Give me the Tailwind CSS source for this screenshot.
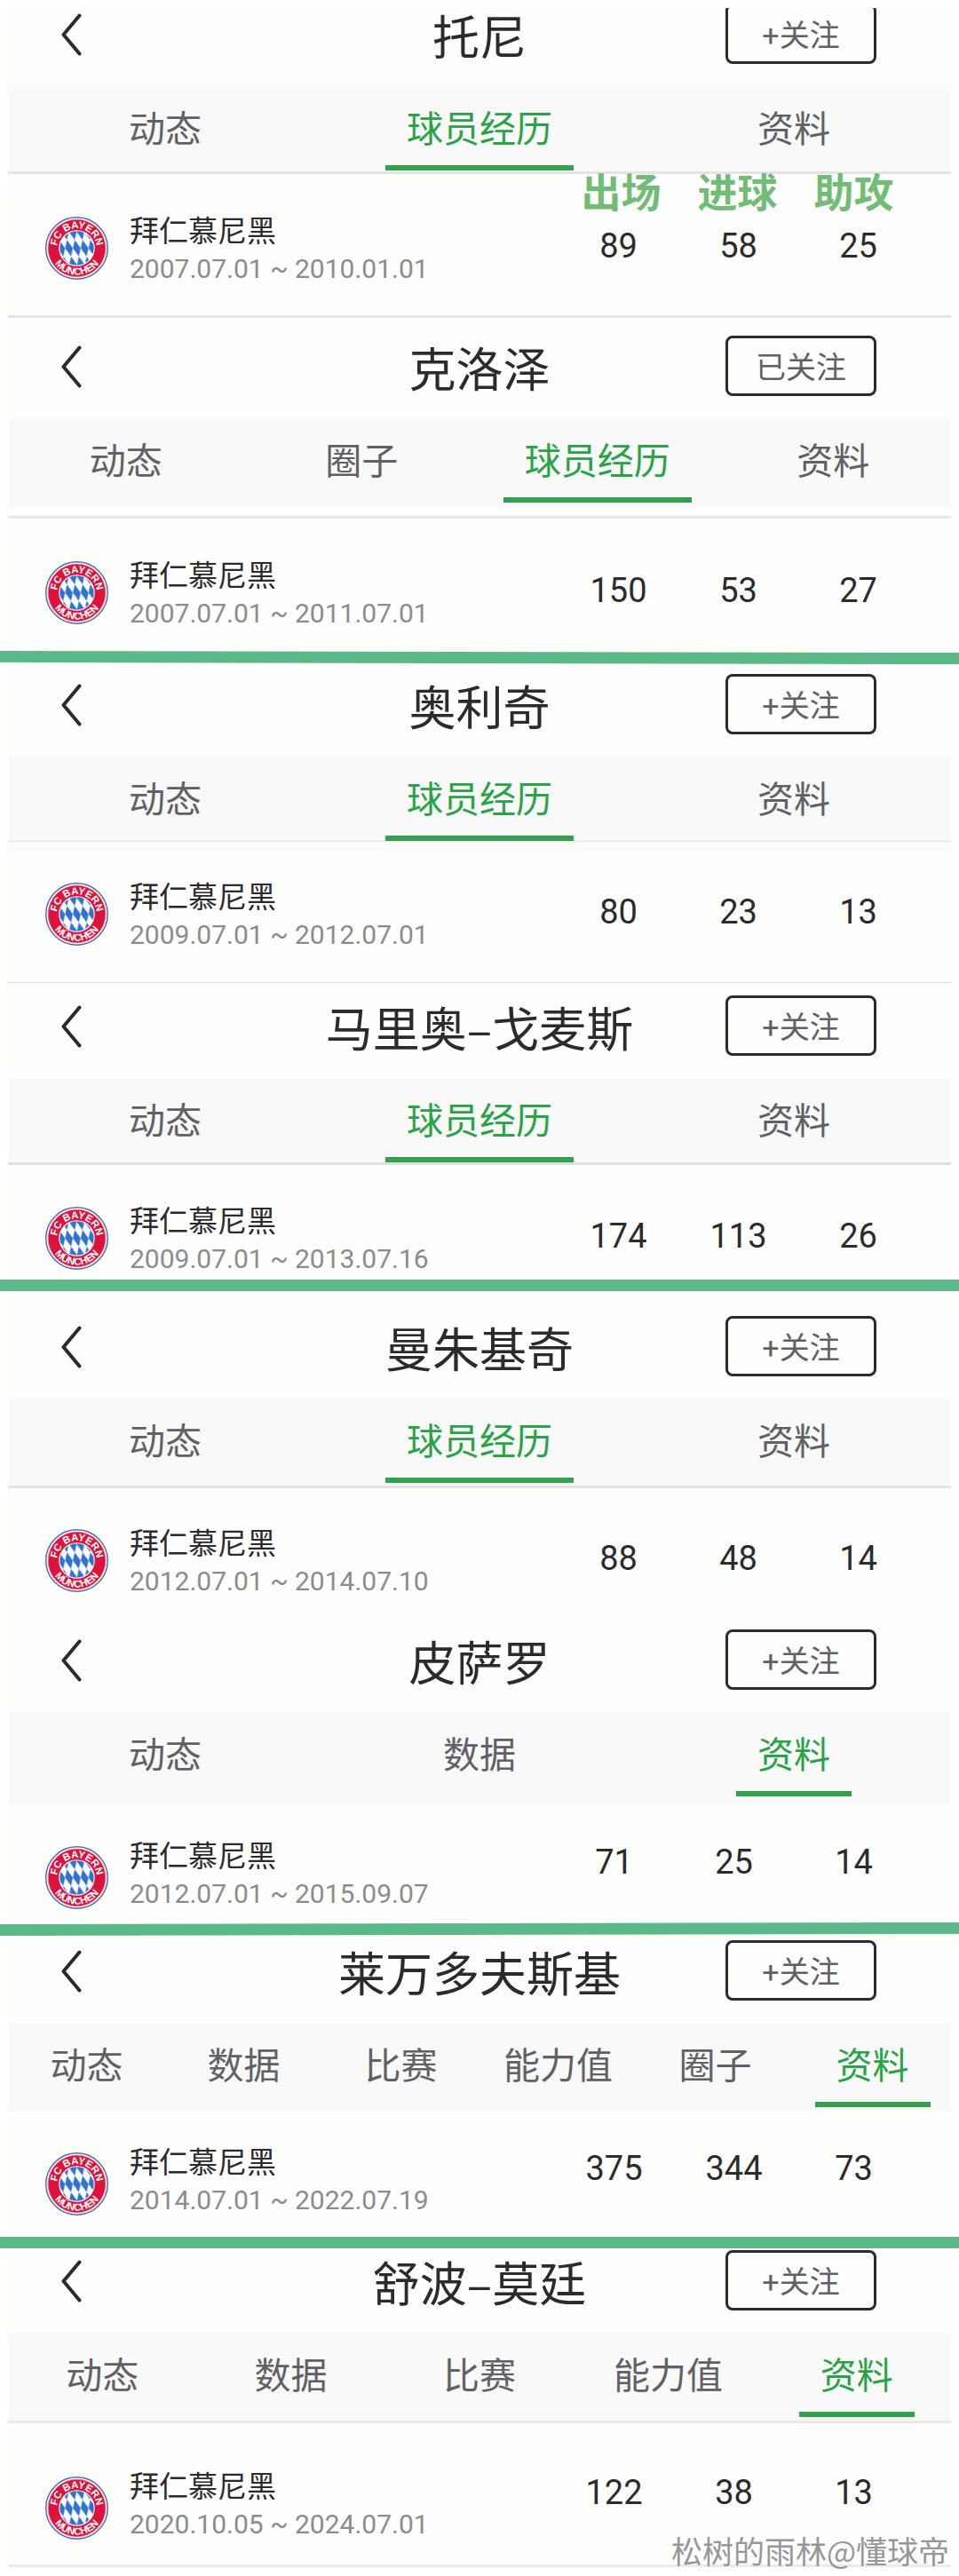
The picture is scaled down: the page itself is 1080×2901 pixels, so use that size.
<!DOCTYPE html>
<html lang="zh-CN">

<head>
	<meta charset="utf-8">
	<meta name="viewport" content="width=device-width, initial-scale=1">
	<title>拜仁慕尼黑 中锋数据</title>
	<script src="https://cdn.jsdelivr.net/npm/@tailwindcss/browser@4"></script>
</head>

<body class="bg-white text-[#2b2b2e] font-[Roboto,'Noto_Sans_CJK_SC',sans-serif]">

	<!-- back arrow, used by every header -->
	<svg class="absolute w-0 h-0" aria-hidden="true">
		<symbol id="back" viewBox="0 0 24 48">
			<path d="M21.500 2.500L3.500 24L21.500 45.500" fill="none" stroke="#2b2b2e" stroke-width="4" stroke-linecap="round" stroke-linejoin="round"/>
		</symbol>
	</svg>

	<main class="pt-[9px] pb-3">

		<section class="mx-[9px] bg-[#fefefc] overflow-hidden border-b-3 border-[#e4e4e4]">
			<header class="-mt-[5px] h-[93px] grid grid-cols-[1fr_auto_1fr] items-start pl-[59px] pr-[84px]">
				<button class="w-6 mt-[11px]" aria-label="返回"><svg class="w-6 h-12"><use href="#back"/></svg></button>
				<h2 class="font-['Noto_Sans_CJK_SC',sans-serif] text-[53px] leading-[70px] pl-[25px]">托尼</h2>
				<button class="justify-self-end w-[170px] h-[68px] border-3 border-[#2b2b2e] rounded-lg text-[34px] leading-[62px] pt-[2px] text-[#606166]">+关注</button>
			</header>
			<nav class="flex h-[99px] bg-[#f9f9f9] border-b-3 border-[#e4e4e4] text-[41px] leading-10 text-[#606166]">
				<div class="flex-1 flex justify-center"><a href="#" class="h-[95px] px-6 pt-[29px]">动态</a></div>
				<div class="flex-1 flex justify-center"><a href="#" class="h-[95px] px-6 pt-[29px] text-[#28a346] border-b-6 border-[#32a04d]">球员经历</a></div>
				<div class="flex-1 flex justify-center"><a href="#" class="h-[95px] px-6 pt-[29px]">资料</a></div>
			</nav>
			<div class="flex justify-end h-12 pr-[44px] text-[45px] leading-[45px] font-bold text-[#72bc78] text-center">
				<span class="w-[131px]">出场</span>
				<span class="w-[131px]">进球</span>
				<span class="w-[131px]">助攻</span>
			</div>
			<div class="flex items-start pl-[42px] pr-[37px] pb-9">
				<!-- club badge, reused by the other rows -->
				<svg class="w-[71px] h-[71px]" viewBox="0 0 100 100">
					<defs>
						<pattern id="lozenge" width="12" height="27" patternUnits="userSpaceOnUse" patternTransform="translate(50 50) rotate(-14) skewY(14)">
							<path d="M0 -13.5L6 0L0 13.5L-6 0ZM12 -13.5L18 0L12 13.5L6 0ZM0 13.5L6 27L0 40.5L-6 27ZM12 13.5L18 27L12 40.5L6 27Z" fill="#2f72cf"/>
						</pattern>
						<path id="arcTop" d="M18.500 50A31.500 31.500 0 0 1 81.500 50"/>
						<path id="arcBottom" d="M7.500 50A42.500 42.500 0 0 0 92.500 50"/>
					</defs>
					<g id="club">
						<circle cx="50" cy="50" r="49" fill="#fff" stroke="#5266b0" stroke-width="2"/>
						<circle cx="50" cy="50" r="45.500" fill="#dc143c" stroke="#e0668a" stroke-width="1"/>
						<circle cx="50" cy="50" r="28.500" fill="#fff"/>
						<circle cx="50" cy="50" r="27" fill="url(#lozenge)"/>
						<g fill="#fff" font-family="'Liberation Sans', sans-serif" font-weight="700" font-size="16" text-anchor="middle">
							<text><textPath href="#arcTop" startOffset="50%">FC BAYERN</textPath></text>
							<text><textPath href="#arcBottom" startOffset="50%">MÜNCHEN</textPath></text>
						</g>
					</g>
				</svg>
				<div class="flex-1 pl-6">
					<p class="text-[33px] leading-[34px]">拜仁慕尼黑</p>
					<p class="mt-[9px] text-[30px] leading-8 text-[#8b8c8e]">2007.07.01 ~ 2010.01.01</p>
				</div>
				<div class="grid grid-cols-[135px_135px_135px] text-center text-[38px] leading-[66px]">
					<span>89</span><span>58</span><span>25</span>
				</div>
			</div>
		</section>

		<section class="mx-[9px] bg-[#fefefc] pt-5 pb-[26px]">
			<header class="h-[93px] grid grid-cols-[1fr_auto_1fr] items-start pl-[59px] pr-[84px]">
				<button class="w-6 mt-[11px]" aria-label="返回"><svg class="w-6 h-12"><use href="#back"/></svg></button>
				<h2 class="font-['Noto_Sans_CJK_SC',sans-serif] text-[53px] leading-[70px] pl-[25px]">克洛泽</h2>
				<button class="justify-self-end w-[170px] h-[68px] border-3 border-[#2b2b2e] rounded-lg text-[34px] leading-[62px] pt-[2px] text-[#606166]">已关注</button>
			</header>
			<nav class="flex h-[100px] bg-[#f9f9f9] text-[41px] leading-10 text-[#606166]">
				<div class="flex-1 flex justify-center"><a href="#" class="h-[95px] px-6 pt-[29px]">动态</a></div>
				<div class="flex-1 flex justify-center"><a href="#" class="h-[95px] px-6 pt-[29px]">圈子</a></div>
				<div class="flex-1 flex justify-center"><a href="#" class="h-[95px] px-6 pt-[29px] text-[#28a346] border-b-6 border-[#32a04d]">球员经历</a></div>
				<div class="flex-1 flex justify-center"><a href="#" class="h-[95px] px-6 pt-[29px]">资料</a></div>
			</nav>
			<hr class="mt-[10px] border-t-3 border-[#e9e9e9]">
			<div class="flex items-start pl-[42px] pr-[37px] pt-12">
				<svg class="w-[71px] h-[71px]" viewBox="0 0 100 100"><use href="#club"/></svg>
				<div class="flex-1 pl-6">
					<p class="text-[33px] leading-[34px]">拜仁慕尼黑</p>
					<p class="mt-[9px] text-[30px] leading-8 text-[#8b8c8e]">2007.07.01 ~ 2011.07.01</p>
				</div>
				<div class="grid grid-cols-[135px_135px_135px] text-center text-[38px] leading-[66px]">
					<span>150</span><span>53</span><span>27</span>
				</div>
			</div>
		</section>

		<!-- green stroke, slightly lower on the right -->
		<svg class="block w-full h-[15px]" viewBox="0 0 100 15" preserveAspectRatio="none"><path d="M0 0L100 2V15L0 13Z" fill="#5bb888"/></svg>

		<section class="mx-[9px] bg-[#fefefc] pt-[11px] border-b border-[#dedede]">
			<header class="h-[93px] grid grid-cols-[1fr_auto_1fr] items-start pl-[59px] pr-[84px]">
				<button class="w-6 mt-[11px]" aria-label="返回"><svg class="w-6 h-12"><use href="#back"/></svg></button>
				<h2 class="font-['Noto_Sans_CJK_SC',sans-serif] text-[53px] leading-[70px] pl-[25px]">奥利奇</h2>
				<button class="justify-self-end w-[170px] h-[68px] border-3 border-[#2b2b2e] rounded-lg text-[34px] leading-[62px] pt-[2px] text-[#606166]">+关注</button>
			</header>
			<nav class="flex h-24 bg-[#f9f9f9] border-b border-[#dedede] text-[41px] leading-10 text-[#606166]">
				<div class="flex-1 flex justify-center"><a href="#" class="h-[95px] px-6 pt-[29px]">动态</a></div>
				<div class="flex-1 flex justify-center"><a href="#" class="h-[95px] px-6 pt-[29px] text-[#28a346] border-b-6 border-[#32a04d]">球员经历</a></div>
				<div class="flex-1 flex justify-center"><a href="#" class="h-[95px] px-6 pt-[29px]">资料</a></div>
			</nav>
			<div class="h-[10px] bg-[#fbfbfa]"></div>
			<div class="flex items-start pl-[42px] pr-[37px] pt-9 pb-[37px]">
				<svg class="w-[71px] h-[71px]" viewBox="0 0 100 100"><use href="#club"/></svg>
				<div class="flex-1 pl-6">
					<p class="text-[33px] leading-[34px]">拜仁慕尼黑</p>
					<p class="mt-[9px] text-[30px] leading-8 text-[#8b8c8e]">2009.07.01 ~ 2012.07.01</p>
				</div>
				<div class="grid grid-cols-[135px_135px_135px] text-center text-[38px] leading-[66px]">
					<span>80</span><span>23</span><span>13</span>
				</div>
			</div>
		</section>

		<section class="mx-[9px] bg-[#fefefc] pt-[14px] pb-[7px]">
			<header class="h-[93px] grid grid-cols-[1fr_auto_1fr] items-start pl-[59px] pr-[84px]">
				<button class="w-6 mt-[11px]" aria-label="返回"><svg class="w-6 h-12"><use href="#back"/></svg></button>
				<h2 class="font-['Noto_Sans_CJK_SC',sans-serif] text-[53px] leading-[70px] pl-[25px]">马里奥–戈麦斯</h2>
				<button class="justify-self-end w-[170px] h-[68px] border-3 border-[#2b2b2e] rounded-lg text-[34px] leading-[62px] pt-[2px] text-[#606166]">+关注</button>
			</header>
			<nav class="flex h-[98px] bg-[#f9f9f9] border-b-3 border-[#e0e0e0] text-[41px] leading-10 text-[#606166]">
				<div class="flex-1 flex justify-center"><a href="#" class="h-[95px] px-6 pt-[29px]">动态</a></div>
				<div class="flex-1 flex justify-center"><a href="#" class="h-[95px] px-6 pt-[29px] text-[#28a346] border-b-6 border-[#32a04d]">球员经历</a></div>
				<div class="flex-1 flex justify-center"><a href="#" class="h-[95px] px-6 pt-[29px]">资料</a></div>
			</nav>
			<div class="flex items-start pl-[42px] pr-[37px] pt-[47px]">
				<svg class="w-[71px] h-[71px]" viewBox="0 0 100 100"><use href="#club"/></svg>
				<div class="flex-1 pl-6">
					<p class="text-[33px] leading-[34px]">拜仁慕尼黑</p>
					<p class="mt-[9px] text-[30px] leading-8 text-[#8b8c8e]">2009.07.01 ~ 2013.07.16</p>
				</div>
				<div class="grid grid-cols-[135px_135px_135px] text-center text-[38px] leading-[66px]">
					<span>174</span><span>113</span><span>26</span>
				</div>
			</div>
		</section>

		<div class="h-[13px] bg-[#5bb888]"></div>

		<section class="mx-[9px] bg-[#fefefc] pt-7">
			<header class="h-[93px] grid grid-cols-[1fr_auto_1fr] items-start pl-[59px] pr-[84px]">
				<button class="w-6 mt-[11px]" aria-label="返回"><svg class="w-6 h-12"><use href="#back"/></svg></button>
				<h2 class="font-['Noto_Sans_CJK_SC',sans-serif] text-[53px] leading-[70px] pl-[25px]">曼朱基奇</h2>
				<button class="justify-self-end w-[170px] h-[68px] border-3 border-[#2b2b2e] rounded-lg text-[34px] leading-[62px] pt-[2px] text-[#606166]">+关注</button>
			</header>
			<nav class="flex h-[101px] bg-[#f9f9f9] border-b-3 border-[#e4e4e4] text-[41px] leading-10 text-[#606166]">
				<div class="flex-1 flex justify-center"><a href="#" class="h-[95px] px-6 pt-[29px]">动态</a></div>
				<div class="flex-1 flex justify-center"><a href="#" class="h-[95px] px-6 pt-[29px] text-[#28a346] border-b-6 border-[#32a04d]">球员经历</a></div>
				<div class="flex-1 flex justify-center"><a href="#" class="h-[95px] px-6 pt-[29px]">资料</a></div>
			</nav>
			<div class="flex items-start pl-[42px] pr-[37px] pt-[46px]">
				<svg class="w-[71px] h-[71px]" viewBox="0 0 100 100"><use href="#club"/></svg>
				<div class="flex-1 pl-6">
					<p class="text-[33px] leading-[34px]">拜仁慕尼黑</p>
					<p class="mt-[9px] text-[30px] leading-8 text-[#8b8c8e]">2012.07.01 ~ 2014.07.10</p>
				</div>
				<div class="grid grid-cols-[135px_135px_135px] text-center text-[38px] leading-[66px]">
					<span>88</span><span>48</span><span>14</span>
				</div>
			</div>
		</section>

		<section class="mx-[9px] bg-[#fefefc] pt-[38px] pb-[15px]">
			<header class="h-[93px] grid grid-cols-[1fr_auto_1fr] items-start pl-[59px] pr-[84px]">
				<button class="w-6 mt-[11px]" aria-label="返回"><svg class="w-6 h-12"><use href="#back"/></svg></button>
				<h2 class="font-['Noto_Sans_CJK_SC',sans-serif] text-[53px] leading-[70px] pl-[25px]">皮萨罗</h2>
				<button class="justify-self-end w-[170px] h-[68px] border-3 border-[#2b2b2e] rounded-lg text-[34px] leading-[62px] pt-[2px] text-[#606166]">+关注</button>
			</header>
			<nav class="flex h-[104px] bg-[#f9f9f9] text-[41px] leading-10 text-[#606166]">
				<div class="flex-1 flex justify-center"><a href="#" class="h-[95px] px-6 pt-[29px]">动态</a></div>
				<div class="flex-1 flex justify-center"><a href="#" class="h-[95px] px-6 pt-[29px]">数据</a></div>
				<div class="flex-1 flex justify-center"><a href="#" class="h-[95px] px-6 pt-[29px] text-[#28a346] border-b-6 border-[#32a04d]">资料</a></div>
			</nav>
			<div class="flex items-start pl-[42px] pr-[42px] pt-[42px]">
				<svg class="w-[71px] h-[71px] mt-[5px]" viewBox="0 0 100 100"><use href="#club"/></svg>
				<div class="flex-1 pl-6">
					<p class="text-[33px] leading-[34px]">拜仁慕尼黑</p>
					<p class="mt-[9px] text-[30px] leading-8 text-[#8b8c8e]">2012.07.01 ~ 2015.09.07</p>
				</div>
				<div class="grid grid-cols-[135px_135px_135px] text-center text-[38px] leading-[46px]">
					<span>71</span><span>25</span><span>14</span>
				</div>
			</div>
		</section>

		<!-- green stroke, slightly higher on the right -->
		<svg class="block w-full h-[15px]" viewBox="0 0 100 15" preserveAspectRatio="none"><path d="M0 2L100 0V13L0 15Z" fill="#5bb888"/></svg>

		<section class="mx-[9px] bg-[#fefefc] pt-[5px] pb-6">
			<header class="h-[93px] grid grid-cols-[1fr_auto_1fr] items-start pl-[59px] pr-[84px]">
				<button class="w-6 mt-[11px]" aria-label="返回"><svg class="w-6 h-12"><use href="#back"/></svg></button>
				<h2 class="font-['Noto_Sans_CJK_SC',sans-serif] text-[53px] leading-[70px] pl-[25px]">莱万多夫斯基</h2>
				<button class="justify-self-end w-[170px] h-[68px] border-3 border-[#2b2b2e] rounded-lg text-[34px] leading-[62px] pt-[2px] text-[#606166]">+关注</button>
			</header>
			<nav class="flex h-[100px] bg-[#f9f9f9] text-[41px] leading-10 text-[#606166]">
				<div class="flex-1 flex justify-center"><a href="#" class="h-[95px] px-6 pt-[29px]">动态</a></div>
				<div class="flex-1 flex justify-center"><a href="#" class="h-[95px] px-6 pt-[29px]">数据</a></div>
				<div class="flex-1 flex justify-center"><a href="#" class="h-[95px] px-6 pt-[29px]">比赛</a></div>
				<div class="flex-1 flex justify-center"><a href="#" class="h-[95px] px-6 pt-[29px]">能力值</a></div>
				<div class="flex-1 flex justify-center"><a href="#" class="h-[95px] px-6 pt-[29px]">圈子</a></div>
				<div class="flex-1 flex justify-center"><a href="#" class="h-[95px] px-6 pt-[29px] text-[#28a346] border-b-6 border-[#32a04d]">资料</a></div>
			</nav>
			<div class="flex items-start pl-[42px] pr-[42px] pt-[41px]">
				<svg class="w-[71px] h-[71px] mt-[5px]" viewBox="0 0 100 100"><use href="#club"/></svg>
				<div class="flex-1 pl-6">
					<p class="text-[33px] leading-[34px]">拜仁慕尼黑</p>
					<p class="mt-[9px] text-[30px] leading-8 text-[#8b8c8e]">2014.07.01 ~ 2022.07.19</p>
				</div>
				<div class="grid grid-cols-[135px_135px_135px] text-center text-[38px] leading-[46px]">
					<span>375</span><span>344</span><span>73</span>
				</div>
			</div>
		</section>

		<div class="h-[13px] bg-[#5bb888]"></div>

		<section class="relative mx-[9px] bg-[#fefefc] pt-[2px] border-b-3 border-[#ebebeb]">
			<header class="h-[93px] grid grid-cols-[1fr_auto_1fr] items-start pl-[59px] pr-[84px]">
				<button class="w-6 mt-[11px]" aria-label="返回"><svg class="w-6 h-12"><use href="#back"/></svg></button>
				<h2 class="font-['Noto_Sans_CJK_SC',sans-serif] text-[53px] leading-[70px] pl-[25px]">舒波–莫廷</h2>
				<button class="justify-self-end w-[170px] h-[68px] border-3 border-[#2b2b2e] rounded-lg text-[34px] leading-[62px] pt-[2px] text-[#606166]">+关注</button>
			</header>
			<nav class="flex h-[102px] bg-[#f9f9f9] border-b-3 border-[#e9e9e9] text-[41px] leading-10 text-[#606166]">
				<div class="flex-1 flex justify-center"><a href="#" class="h-[95px] px-6 pt-[29px]">动态</a></div>
				<div class="flex-1 flex justify-center"><a href="#" class="h-[95px] px-6 pt-[29px]">数据</a></div>
				<div class="flex-1 flex justify-center"><a href="#" class="h-[95px] px-6 pt-[29px]">比赛</a></div>
				<div class="flex-1 flex justify-center"><a href="#" class="h-[95px] px-6 pt-[29px]">能力值</a></div>
				<div class="flex-1 flex justify-center"><a href="#" class="h-[95px] px-6 pt-[29px] text-[#28a346] border-b-6 border-[#32a04d]">资料</a></div>
			</nav>
			<div class="flex items-start pl-[42px] pr-[42px] pt-[55px] pb-7">
				<svg class="w-[71px] h-[71px] mt-[5px]" viewBox="0 0 100 100"><use href="#club"/></svg>
				<div class="flex-1 pl-6">
					<p class="text-[33px] leading-[34px]">拜仁慕尼黑</p>
					<p class="mt-[9px] text-[30px] leading-8 text-[#8b8c8e]">2020.10.05 ~ 2024.07.01</p>
				</div>
				<div class="grid grid-cols-[135px_135px_135px] text-center text-[38px] leading-[46px]">
					<span>122</span><span>38</span><span>13</span>
				</div>
			</div>
			<!-- watermark -->
			<p class="absolute right-[2px] bottom-0 font-['Noto_Sans_CJK_SC',sans-serif] text-[35px] leading-8 text-[#969797]">松树的雨林@懂球帝</p>
		</section>

	</main>
</body>

</html>
